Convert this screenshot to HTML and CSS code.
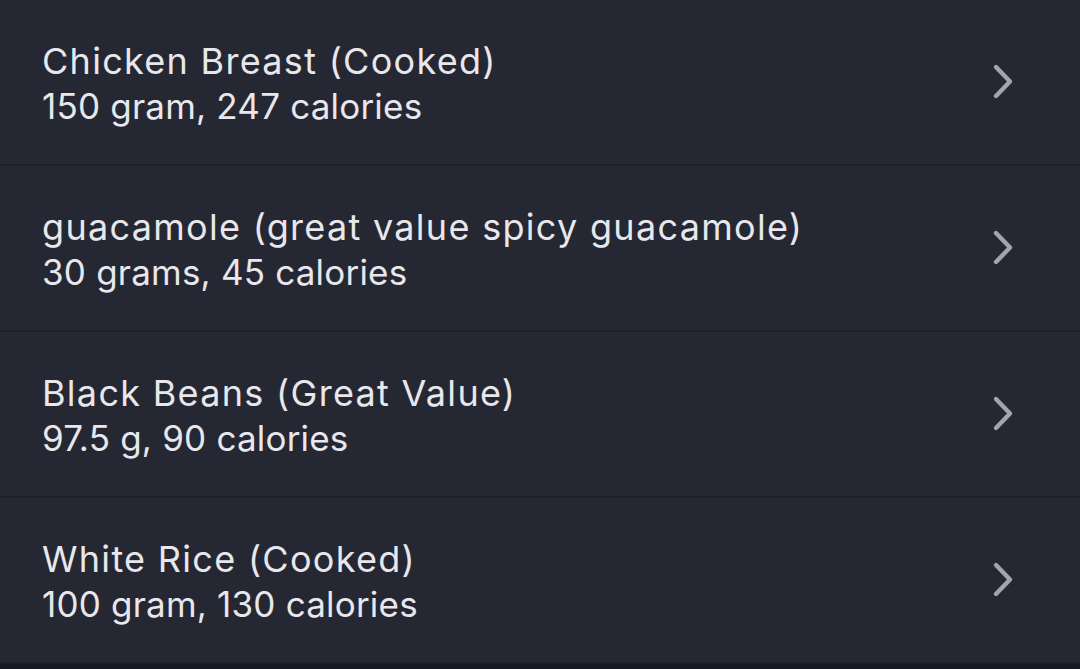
FILE: index.html
```html
<!DOCTYPE html>
<html>
<head>
<meta charset="utf-8">
<link rel="stylesheet" href="styles.css">
</head>
<body>
<div class="list">
  <div class="row">
    <div class="text">
      <div class="title">Chicken Breast (Cooked)</div>
      <div class="sub">150 gram, 247 calories</div>
    </div>
    <svg class="chev" width="24" height="38" viewBox="0 0 24 38"><path d="M4 4 L18 18.5 L4 33" fill="none" stroke="#a4a4ab" stroke-width="4.4" stroke-linecap="round" stroke-linejoin="round"/></svg>
  </div>
  <div class="row">
    <div class="text">
      <div class="title">guacamole (great value spicy guacamole)</div>
      <div class="sub">30 grams, 45 calories</div>
    </div>
    <svg class="chev" width="24" height="38" viewBox="0 0 24 38"><path d="M4 4 L18 18.5 L4 33" fill="none" stroke="#a4a4ab" stroke-width="4.4" stroke-linecap="round" stroke-linejoin="round"/></svg>
  </div>
  <div class="row">
    <div class="text">
      <div class="title">Black Beans (Great Value)</div>
      <div class="sub">97.5 g, 90 calories</div>
    </div>
    <svg class="chev" width="24" height="38" viewBox="0 0 24 38"><path d="M4 4 L18 18.5 L4 33" fill="none" stroke="#a4a4ab" stroke-width="4.4" stroke-linecap="round" stroke-linejoin="round"/></svg>
  </div>
  <div class="row">
    <div class="text">
      <div class="title">White Rice (Cooked)</div>
      <div class="sub">100 gram, 130 calories</div>
    </div>
    <svg class="chev" width="24" height="38" viewBox="0 0 24 38"><path d="M4 4 L18 18.5 L4 33" fill="none" stroke="#a4a4ab" stroke-width="4.4" stroke-linecap="round" stroke-linejoin="round"/></svg>
  </div>
</div>
</body>
</html>
```
FILE: styles.css
```css
html, body {
  margin: 0;
  padding: 0;
  background: #171923;
  width: 1080px;
  height: 669px;
  overflow: hidden;
}
.list {
  display: flex;
  flex-direction: column;
  background: #252733;
}
.row {
  height: 164px;
  border-bottom: 2px solid #1e2029;
  display: flex;
  align-items: center;
  padding: 0 64px 0 42px;
  box-sizing: content-box;
}
.text {
  flex: 1;
  display: flex;
  flex-direction: column;
  margin-top: 3px;
  font-family: Inter, "Noto Sans", sans-serif;
  color: #e7e7ec;
}
.title {
  font-size: 36px;
  line-height: 45px;
  letter-spacing: 1.3px;
}
.sub {
  font-size: 35px;
  line-height: 44px;
  letter-spacing: 0.2px;
}
.chev {
  display: block;
}
```
